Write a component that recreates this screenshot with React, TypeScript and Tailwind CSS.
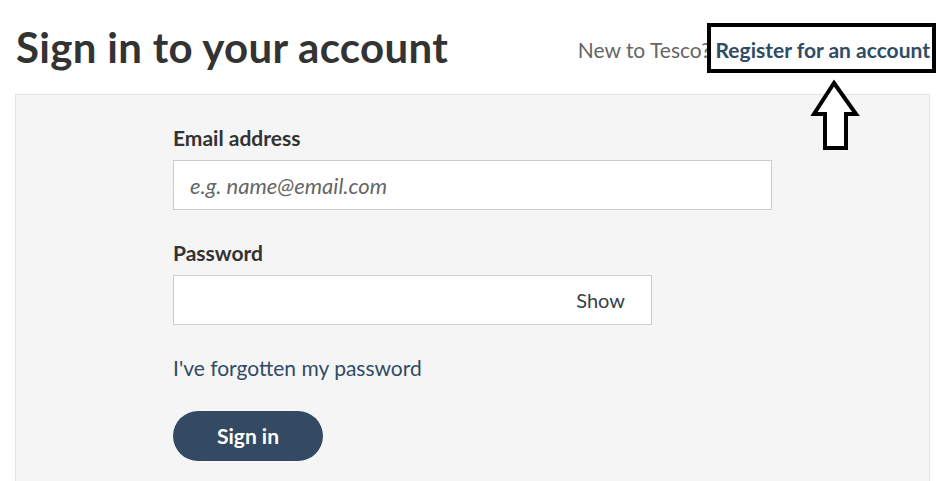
import { useState } from 'react';

export default function App() {
  const [show, setShow] = useState(false);

  return (
    <div
      className="relative h-[481px] w-[937px] overflow-hidden bg-white text-[#333333]"
      style={{ fontFamily: 'Lato, "Open Sans", sans-serif' }}
    >
      <header className="flex h-[94px] items-start justify-between pl-[16px] pr-[7px]">
        <h1 className="mt-[23px] text-[42px] font-bold leading-[48px] tracking-[0.3px]">
          Sign in to your account
        </h1>
        <div className="mt-[36px] flex items-baseline text-[21px] leading-[28px]">
          <span className="text-[#666666]">New to Tesco?</span>
          <a href="#" className="ml-[5px] font-bold text-[#2f4b66]">
            Register for an account
          </a>
        </div>
      </header>

      <main className="ml-[15px] mr-[7px] h-[400px] border border-[#e2e2e2] bg-[#f5f5f5] pl-[157px] pt-[29px]">
        <form className="flex flex-col" onSubmit={(e) => e.preventDefault()}>
          <label className="text-[21px] font-bold leading-[28px]">Email address</label>
          <input
            type="email"
            placeholder="e.g. name@email.com"
            className="mt-[8px] h-[50px] w-[599px] border border-[#cccccc] bg-white px-[16px] text-[22px] outline-none placeholder:italic placeholder:text-[#666666]"
          />

          <label className="mt-[29px] text-[21px] font-bold leading-[28px]">Password</label>
          <div className="mt-[8px] flex h-[50px] w-[479px] items-center border border-[#cccccc] bg-white pr-[26px]">
            <input
              type={show ? 'text' : 'password'}
              className="h-full flex-1 bg-transparent px-[16px] text-[20px] outline-none"
            />
            <button
              type="button"
              className="text-[20px] text-[#333f48]"
              onClick={() => setShow(!show)}
            >
              {show ? 'Hide' : 'Show'}
            </button>
          </div>

          <a href="#" className="mt-[29px] text-[21px] leading-[28px] text-[#2f4b66]">
            I've forgotten my password
          </a>

          <button
            type="submit"
            className="mt-[29px] h-[50px] w-[150px] rounded-full bg-[#334a62] text-[21px] font-bold text-white"
          >
            Sign in
          </button>
        </form>
      </main>

      {/* annotation overlay */}
      <div className="absolute left-[707px] top-[23px] h-[50px] w-[229px] border-[4px] border-black" />
      <svg className="absolute left-[810px] top-[76px]" width="52" height="80" viewBox="0 0 52 80">
        <polygon
          points="24,7 46,38 36,38 36,72 15,72 15,38 4,38"
          fill="white"
          stroke="black"
          strokeWidth="4"
          strokeLinejoin="miter"
        />
      </svg>
    </div>
  );
}
